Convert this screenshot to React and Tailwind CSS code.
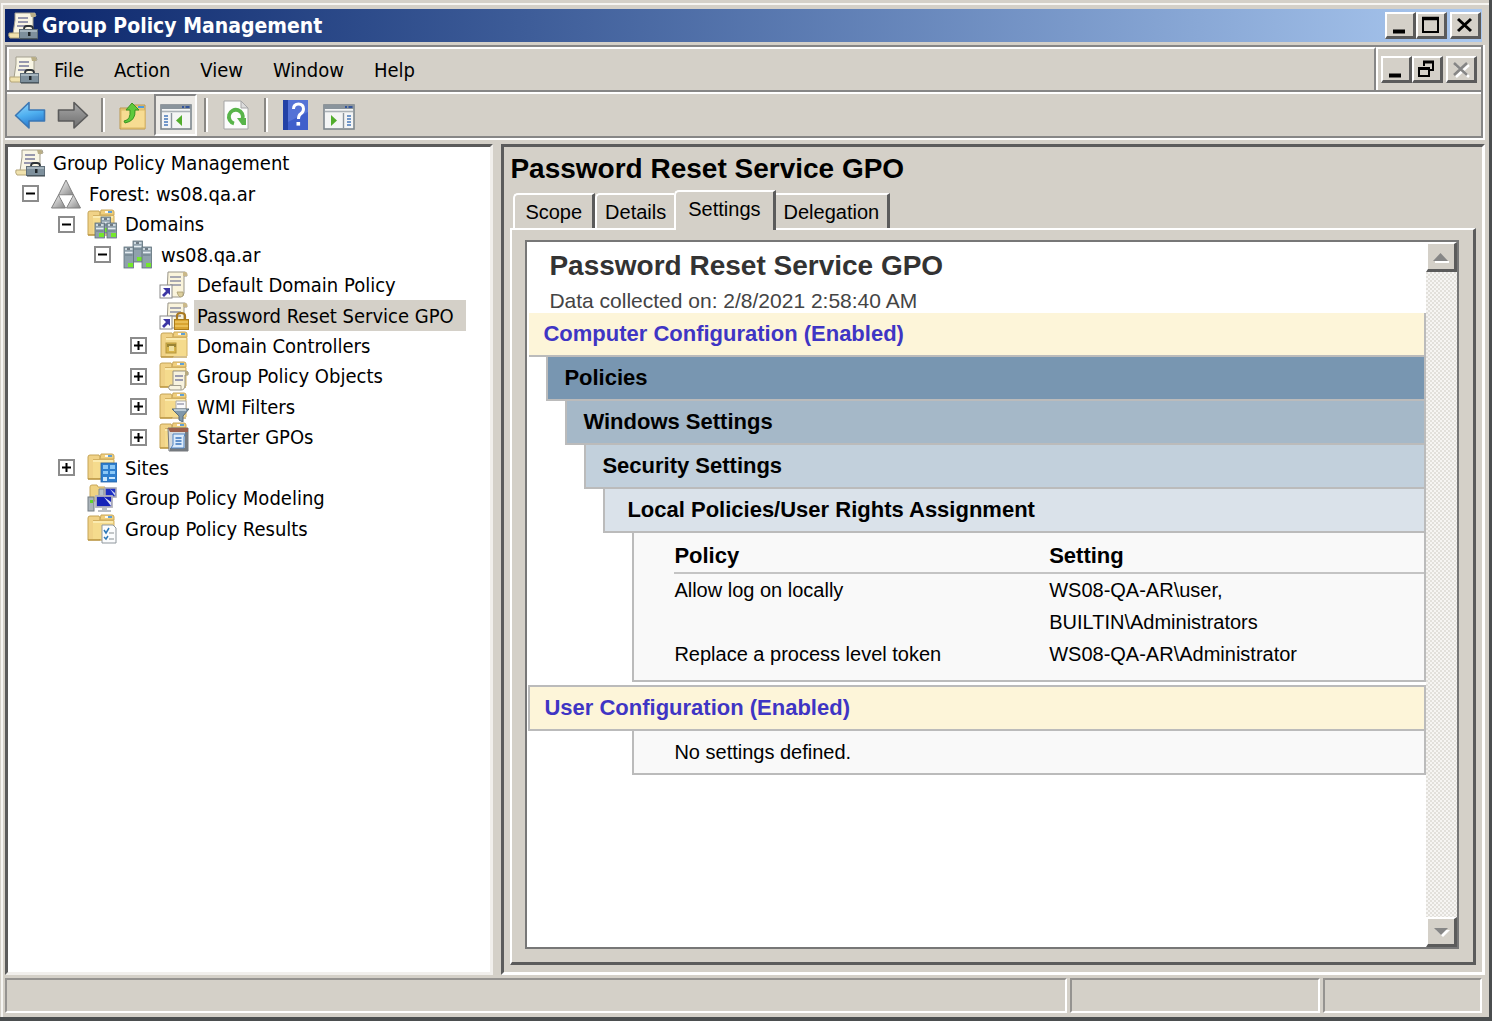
import React, { useState } from 'react';
import clsx from 'clsx';

/* ---------- Icons ---------- */

function GpmIcon() {
  return (
    <svg className="size-[30px] shrink-0" viewBox="0 0 30 30" aria-hidden="true">
      <path d="M7 2h20l1 3-3 1v17H5L7 9z" fill="#f8f5e4" stroke="#a39f8e" strokeWidth="1" />
      <path d="M22 2h4q2 1 1 4h-4z" fill="#b9ae86" />
      <path d="M10 7h10M10 11h10M9 15h10" stroke="#77799a" strokeWidth="1.6" />
      <path d="M1 22h13v5H2q-2-2-1-5z" fill="#f0e2ae" stroke="#b5a678" strokeWidth="1" />
      <path d="M16 18q0-3 3-3h3q3 0 3 3" fill="none" stroke="#2d3338" strokeWidth="1.8" />
      <rect x="11.5" y="18.5" width="18" height="9" fill="#7e909c" stroke="#5f6e79" />
      <path d="M12 20h17" stroke="#b3c0c8" strokeWidth="1.5" />
      <rect x="20" y="21" width="2.5" height="4" fill="#20262a" />
      <path d="M12 28h18" stroke="#394249" strokeWidth="1" />
    </svg>
  );
}

function ForestIcon() {
  return (
    <svg className="size-[30px] shrink-0" viewBox="0 0 30 30" aria-hidden="true">
      <defs>
        <linearGradient id="forest-fill" x1="0" y1="0" x2="1" y2="1">
          <stop offset="0.2" stopColor="#e4e4e4" />
          <stop offset="1" stopColor="#858585" />
        </linearGradient>
      </defs>
      <g fill="url(#forest-fill)" stroke="#7f7f7f" strokeWidth="1" strokeLinejoin="round">
        <path d="M15 1l7.500 15h-15z" />
        <path d="M7.500 16l7 13h-14z" />
        <path d="M22.500 16l7 13h-14z" />
      </g>
      <path d="M8.500 16.500h13L15 28z" fill="#fff" />
    </svg>
  );
}

function Folder() {
  return (
    <g>
      <path d="M1 4q0-2 2-2h9l1 2v22H1z" fill="#f0d287" stroke="#c5a457" strokeWidth="1" />
      <path d="M14 1h11q2 0 2 2v3H13z" fill="#f0cf7d" stroke="#c9a75a" strokeWidth="1" />
      <path d="M18 3h3" stroke="#fff" strokeWidth="1.8" />
      <path d="M21 3h4" stroke="#4f9be0" strokeWidth="1.8" />
      <path d="M6 6h21v19H6z" fill="#f5db8d" />
      <path d="M6 6.500h21V25" fill="none" stroke="#d3b061" strokeWidth="1" />
      <path d="M6 8h20" stroke="#fdf0bd" strokeWidth="1.5" />
      <path d="M1 26h26" stroke="#b8923d" strokeWidth="1.2" />
    </g>
  );
}

function Server({ x, y, h = 16 }) {
  return (
    <g transform={`translate(${x} ${y})`}>
      <rect width="9.5" height={h} fill="#8fa1ac" stroke="#5f707b" strokeWidth="0.8" />
      <path d="M1 2h7.500M1 5.500h7.500" stroke="#e5edf1" strokeWidth="1.6" />
      <path d="M3 2h3" stroke="#48545d" strokeWidth="1.4" />
      <path d="M1 8h7.500" stroke="#6b7c87" strokeWidth="1" />
      <rect x="4" y={h - 5} width="5" height="4" fill="#74e82c" />
    </g>
  );
}

function DomainsIcon() {
  return (
    <svg className="size-[30px] shrink-0" viewBox="0 0 30 30" aria-hidden="true">
      <Folder />
      <Server x={14} y={8} />
      <Server x={8} y={14} h={15} />
      <Server x={20} y={14} h={15} />
    </svg>
  );
}

function DomainIcon() {
  return (
    <svg className="size-[30px] shrink-0" viewBox="0 0 30 30" aria-hidden="true">
      <Server x={10} y={1} h={21} />
      <Server x={1} y={7} h={21} />
      <Server x={19} y={7} h={21} />
    </svg>
  );
}

function Scroll() {
  return (
    <g>
      <path d="M9 2h17q2 0 2 4h-3v17q0 4-4 4H8q-2-2 0-4z" fill="#faf4dc" stroke="#9a968a" strokeWidth="1" />
      <path d="M24 2h3q2 1 1 4h-4z" fill="#cbb98a" />
      <path d="M18 22h6q1 5-3 5-2-1-3-5z" fill="#dccf9f" stroke="#a79a6d" strokeWidth="0.8" />
      <path d="M11 7h11M11 11h11M11 15h11" stroke="#8d8fa3" strokeWidth="1.4" />
    </g>
  );
}

function Shortcut() {
  return (
    <g>
      <rect x="1" y="15" width="12" height="13" fill="#fff" stroke="#8a8a8a" strokeWidth="1" />
      <path d="M4 18h7v7l-2-2-4 4-2-2 4-4z" fill="#3c36a4" />
    </g>
  );
}

function PolicyLinkIcon() {
  return (
    <svg className="size-[30px] shrink-0" viewBox="0 0 30 30" aria-hidden="true">
      <Scroll />
      <Shortcut />
    </svg>
  );
}

function PolicyLockedIcon() {
  return (
    <svg className="size-[30px] shrink-0" viewBox="0 0 30 30" aria-hidden="true">
      <Scroll />
      <Shortcut />
      <path d="M18 19v-4q0-3 4-3t4 3v4" fill="none" stroke="#a9781f" strokeWidth="2.2" />
      <rect x="15.5" y="18.5" width="14" height="10" fill="#d9a431" stroke="#a87a1c" />
      <path d="M16 21h13M16 25h13" stroke="#f0c862" strokeWidth="1.3" />
    </svg>
  );
}

function ControllersIcon() {
  return (
    <svg className="size-[30px] shrink-0" viewBox="-1 0 30 30" aria-hidden="true">
      <Folder />
      <rect x="6" y="12" width="10" height="10" fill="#d8b54c" stroke="#b8973c" />
      <path d="M7 13h9v3H7z" fill="#9b8434" />
      <rect x="9" y="15" width="5" height="5" fill="#efe0a0" />
    </svg>
  );
}

function ObjectsIcon() {
  return (
    <svg className="size-[30px] shrink-0" viewBox="0 0 30 30" aria-hidden="true">
      <Folder />
      <path d="M14 10h13q3 0 2 4h-3v10q0 5-4 5H11q-3-2 0-5h3z" fill="#f8f3df" stroke="#989384" strokeWidth="1" />
      <path d="M26 10h2q2 1 1 4h-3z" fill="#b8aa7e" />
      <path d="M16 15h8M16 19h8" stroke="#7d80a0" strokeWidth="1.4" />
      <path d="M11 24.500h11v4" fill="none" stroke="#a39e8d" />
    </svg>
  );
}

function FiltersIcon() {
  return (
    <svg className="size-[30px] shrink-0" viewBox="0 0 30 30" aria-hidden="true">
      <Folder />
      <path d="M17 9h10v8H17z" fill="#fafafa" stroke="#aaa" />
      <path d="M18 12h7" stroke="#9092a8" strokeWidth="1.3" />
      <path d="M13 17h17l-6 7v6l-4-2v-4z" fill="#7f97a9" stroke="#566b7b" strokeWidth="1" />
      <path d="M15 18h12" stroke="#d5e1ea" strokeWidth="1.4" />
    </svg>
  );
}

function StarterIcon() {
  return (
    <svg className="size-[30px] shrink-0" viewBox="0 0 30 30" aria-hidden="true">
      <Folder />
      <path d="M9 6h20v23H10z" fill="#d5d9dd" stroke="#76797d" />
      <path d="M9 6h20v4H11z" fill="#9b5f4c" />
      <path d="M26 10h3v19H11v-3h15z" fill="#74797e" />
      <path d="M14 12h12l-1 3v11H12l2-3z" fill="#dcebfb" stroke="#4f83c2" />
      <path d="M16.500 16h6M16.500 19h6M16.500 22h6" stroke="#3974bd" strokeWidth="1.3" />
    </svg>
  );
}

function SitesIcon() {
  return (
    <svg className="size-[30px] shrink-0" viewBox="0 0 30 30" aria-hidden="true">
      <Folder />
      <rect x="14" y="10" width="16" height="19" fill="#2f7fce" stroke="#2461a8" strokeWidth="0.8" />
      <path d="M16 12h5v4h-5zM23 12h5v4h-5zM16 18h5v3h-5zM23 18h5v3h-5z" fill="#8cc8f6" />
      <path d="M16 24h4v4h-4zM22 24h6v2h-6z" fill="#c9e7fd" />
    </svg>
  );
}

function ModelingIcon() {
  return (
    <svg className="size-[30px] shrink-0" viewBox="0 0 30 30" aria-hidden="true">
      <path d="M3 4q0-2 2-2h5l1 2h7v14H3z" fill="#efd283" stroke="#c9a75a" />
      <path d="M12 6h5v10h-5z" fill="#b7c2ca" stroke="#7f8b94" />
      <rect x="18" y="5" width="11" height="9" fill="#1d2fc4" stroke="#a8a8b4" strokeWidth="1.6" />
      <path d="M23 6l5 4v3z" fill="#c7d0f5" />
      <rect x="1" y="14" width="6" height="14" fill="#aab4ba" stroke="#737d84" />
      <rect x="3" y="17" width="3" height="3" fill="#5ed32b" />
      <rect x="9" y="13" width="16" height="11" fill="#1623b8" stroke="#b3b3bd" strokeWidth="1.8" />
      <path d="M17 14l7 5v4z" fill="#dfe4fa" />
      <path d="M15 25h5v2h4v2H11v-2h4z" fill="#b9bdc3" />
    </svg>
  );
}

function ResultsIcon() {
  return (
    <svg className="size-[30px] shrink-0" viewBox="0 0 30 30" aria-hidden="true">
      <Folder />
      <path d="M15 11h11l3 3v15H15z" fill="#fbfcfd" stroke="#8f979d" />
      <path d="M17 16l2 3 3-5M17 23l2 2 2-3" fill="none" stroke="#2e79b8" strokeWidth="1.5" />
      <path d="M22 19h5M22 25h5" stroke="#8a8f94" strokeWidth="1.2" />
    </svg>
  );
}

function ArrowIcon({ back }) {
  return (
    <svg className="h-[28px] w-[32px]" viewBox="0 0 32 28" aria-hidden="true">
      <defs>
        <linearGradient id="arrow-blue" x1="0" y1="0" x2="0.3" y2="1">
          <stop offset="0" stopColor="#9bd8fb" />
          <stop offset="0.55" stopColor="#4fb0f0" />
          <stop offset="1" stopColor="#2a7ad0" />
        </linearGradient>
        <linearGradient id="arrow-gray" x1="0" y1="0" x2="0" y2="1">
          <stop offset="0" stopColor="#a9a9a9" />
          <stop offset="1" stopColor="#6e6e6e" />
        </linearGradient>
      </defs>
      {back ? (
        <path d="M1.500 14.500L15 1.500V9h15.500v11H15v7z" fill="url(#arrow-blue)" stroke="#3b77b4" strokeWidth="1.6" strokeLinejoin="round" />
      ) : (
        <path d="M30.500 14.500L17 1.500V9H1.500v11H17v7z" fill="url(#arrow-gray)" stroke="#5b5b5b" strokeWidth="1.6" strokeLinejoin="round" />
      )}
    </svg>
  );
}

function UpFolderIcon() {
  return (
    <svg className="size-[30px]" viewBox="0 -1 30 30" aria-hidden="true">
      <path d="M2 7h12l2-3h11v24H2z" fill="#e9c878" stroke="#bb9850" />
      <path d="M20 6h6" stroke="#4f9be0" strokeWidth="2" />
      <path d="M3 9h24v18H3z" fill="#f7dc92" stroke="#dcb967" />
      <path d="M6 20q7-1 6-11H8l6-7 7 7h-4q1 11-10 13z" fill="#5fc93c" stroke="#3c9523" strokeWidth="1" />
    </svg>
  );
}

function PaneIcon({ right }) {
  return (
    <svg className="h-[30px] w-[32px]" viewBox="0 -4 32 30" aria-hidden="true">
      <rect x="1" y="1" width="30" height="24" fill="#f4f5f5" stroke="#7e878e" strokeWidth="1.6" />
      <rect x="1" y="1" width="30" height="4" fill="#8a949c" />
      <path d="M22 3h2M25.500 3h4" stroke="#33549a" strokeWidth="2" />
      <path d="M2 7.500h28" stroke="#aab1b6" strokeWidth="1.6" />
      {right ? (
        <g>
          <path d="M20.500 9v15" stroke="#8a949c" strokeWidth="1.4" />
          <path d="M24 12h4M24 15h4M24 18h4M24 21h4" stroke="#4678bb" strokeWidth="1.5" />
          <path d="M8 11v11l6-5.500z" fill="#52ad2d" />
        </g>
      ) : (
        <g>
          <path d="M11.500 9v15" stroke="#8a949c" strokeWidth="1.4" />
          <path d="M4 12h4M4 15h4M4 18h4M4 21h4" stroke="#4678bb" strokeWidth="1.5" />
          <path d="M22 11v11l-6-5.500z" fill="#52ad2d" />
        </g>
      )}
    </svg>
  );
}

function RefreshIcon() {
  return (
    <svg className="size-[30px]" viewBox="0 0 30 30" aria-hidden="true">
      <path d="M3 1h17l7 7v21H3z" fill="#fcfcfc" stroke="#a5a5a5" />
      <path d="M20 1v7h7z" fill="#dcdcdc" stroke="#a5a5a5" />
      <path d="M13 23.500A7 7 0 1 1 21.500 19" fill="none" stroke="#58b44a" strokeWidth="3.8" />
      <path d="M16 18h9v7h-4z" fill="#58b44a" />
    </svg>
  );
}

function HelpIcon() {
  return (
    <svg className="size-[30px]" viewBox="0 0 30 30" aria-hidden="true">
      <rect x="2" y="0" width="25" height="30" fill="#3f5fcb" />
      <rect x="2" y="0" width="5" height="30" fill="#2341a6" />
      <path d="M7 0h20v12L7 22z" fill="#6480dd" opacity="0.6" />
      <path d="M12.500 9q0-5 5-5t5 5q0 3-3 5-2 1.500-2 5" fill="none" stroke="#fff" strokeWidth="3" />
      <rect x="15.500" y="22" width="3.600" height="3.600" fill="#fff" />
    </svg>
  );
}

/* ---------- Small controls ---------- */

function CaptionButton({ label, kind }) {
  return (
    <button
      type="button"
      aria-label={label}
      className="flex h-[27px] w-[31px] items-center justify-center border-t-2 border-r-3 border-b-3 border-l-2 border-t-white border-r-[#5b5b5b] border-b-[#5b5b5b] border-l-white bg-[#d4d0c8]"
    >
      <svg className="h-[20px] w-[24px]" viewBox="0 0 24 20" aria-hidden="true">
        {kind === 'min' && <path d="M5 16.500h12" stroke="#000" strokeWidth="4" />}
        {kind === 'max' && (
          <g>
            <rect x="4" y="3" width="15" height="14" fill="none" stroke="#000" strokeWidth="2" />
            <path d="M3 3.500h17" stroke="#000" strokeWidth="3.5" />
          </g>
        )}
        {kind === 'restore' && (
          <g>
            <path d="M9 7V3h9v8h-4" fill="none" stroke="#000" strokeWidth="2" />
            <path d="M8 3h11" stroke="#000" strokeWidth="3" />
            <rect x="4" y="10" width="10" height="7" fill="none" stroke="#000" strokeWidth="2" />
            <path d="M3 9.500h12" stroke="#000" strokeWidth="3" />
          </g>
        )}
        {kind === 'close' && <path d="M5 4l13 12M18 4L5 16" stroke="#000" strokeWidth="3" />}
        {kind === 'close-off' && (
          <g>
            <path d="M7 6l13 12M20 6L7 18" stroke="#fff" strokeWidth="2.5" />
            <path d="M5 4l13 12M18 4L5 16" stroke="#868686" strokeWidth="2.5" />
          </g>
        )}
      </svg>
    </button>
  );
}

function ToolButton({ label, pressed, children }) {
  return (
    <button
      type="button"
      aria-label={label}
      aria-pressed={pressed}
      className={clsx(
        'flex h-[42px] w-[43px] items-center justify-center',
        pressed && 'border-2 border-t-[#868686] border-r-white border-b-white border-l-[#868686] bg-[#eceae6]'
      )}
    >
      {children}
    </button>
  );
}

function Separator() {
  return (
    <div className="flex w-[17px] justify-center">
      <div className="h-[34px] border-r-2 border-l-2 border-l-[#8a8884] border-r-white" />
    </div>
  );
}

function ScrollButton({ label, down }) {
  return (
    <button
      type="button"
      aria-label={label}
      className="flex h-[30px] w-full items-center justify-center border-t-2 border-r-3 border-b-3 border-l-2 border-t-white border-r-[#5b5b5b] border-b-[#5b5b5b] border-l-white bg-[#d4d0c8]"
    >
      <svg className="h-[12px] w-[18px]" viewBox="0 0 18 12" aria-hidden="true">
        {down ? (
          <g>
            <path d="M4 4h14l-7 7z" fill="#fff" />
            <path d="M2 2h14L9 9z" fill="#868686" />
          </g>
        ) : (
          <g>
            <path d="M3 11h14" stroke="#fff" strokeWidth="2" />
            <path d="M1 10h15L8.500 2z" fill="#868686" />
          </g>
        )}
      </svg>
    </button>
  );
}

/* ---------- Tree ---------- */

const TREE = [
  { label: 'Group Policy Management', level: 0, icon: GpmIcon },
  { label: 'Forest: ws08.qa.ar', level: 1, icon: ForestIcon, state: 'open' },
  { label: 'Domains', level: 2, icon: DomainsIcon, state: 'open' },
  { label: 'ws08.qa.ar', level: 3, icon: DomainIcon, state: 'open' },
  { label: 'Default Domain Policy', level: 4, icon: PolicyLinkIcon },
  { label: 'Password Reset Service GPO', level: 4, icon: PolicyLockedIcon },
  { label: 'Domain Controllers', level: 4, icon: ControllersIcon, state: 'closed' },
  { label: 'Group Policy Objects', level: 4, icon: ObjectsIcon, state: 'closed' },
  { label: 'WMI Filters', level: 4, icon: FiltersIcon, state: 'closed' },
  { label: 'Starter GPOs', level: 4, icon: StarterIcon, state: 'closed' },
  { label: 'Sites', level: 2, icon: SitesIcon, state: 'closed' },
  { label: 'Group Policy Modeling', level: 2, icon: ModelingIcon },
  { label: 'Group Policy Results', level: 2, icon: ResultsIcon },
];

const INDENT = ['pl-[7px]', 'pl-[14px]', 'pl-[50px]', 'pl-[86px]', 'pl-[122px]'];

function TreeRow({ node, selected, onSelect }) {
  const Icon = node.icon;
  return (
    <li
      role="treeitem"
      aria-level={node.level + 1}
      aria-selected={selected}
      className={clsx('flex items-center', INDENT[node.level])}
    >
      {node.level > 0 && (
        <span className="w-[29px] shrink-0">
          {node.state && (
            <button
              type="button"
              aria-label={node.state === 'open' ? 'Collapse' : 'Expand'}
              className="flex size-[17px] items-center justify-center border-2 border-[#8c8c8c] bg-white"
            >
              <svg className="size-[13px]" viewBox="0 0 13 13" aria-hidden="true">
                <path d="M2 6.500h9" stroke="#000" strokeWidth="2" />
                {node.state === 'closed' && <path d="M6.500 2v9" stroke="#000" strokeWidth="2" />}
              </svg>
            </button>
          )}
        </span>
      )}
      <Icon />
      <button
        type="button"
        onClick={onSelect}
        className={clsx('ml-[5px] h-full pr-[12px] pl-[3px] whitespace-nowrap', selected && 'bg-[#d4d0c8]')}
      >
        {node.label}
      </button>
    </li>
  );
}

/* ---------- Report ---------- */

const SECTIONS = [
  { title: 'Policies', className: 'ml-[19px] bg-[#7896b1] pl-[16px]' },
  { title: 'Windows Settings', className: 'ml-[38px] bg-[#a5b8c8] pl-[16px]' },
  { title: 'Security Settings', className: 'ml-[57px] bg-[#c2d0dc] pl-[16px]' },
  { title: 'Local Policies/User Rights Assignment', className: 'ml-[76px] bg-[#dae2ea] pl-[22px]' },
];

function Report() {
  return (
    <article className="min-w-0 flex-1 overflow-hidden">
      <h2 className="pt-[8px] pl-[22px] text-[28px] leading-[32px] font-bold text-[#333]">Password Reset Service GPO</h2>
      <p className="pt-[7px] pl-[22px] text-[21px] leading-[24px] text-[#444]">Data collected on: 2/8/2021 2:58:40 AM</p>

      <h3 className="ml-[2px] h-[44px] border-r-2 border-b-2 border-[#bbb] bg-[#fdf5d9] pl-[14px] text-[22px] leading-[42px] font-bold text-[#3f35c4]">
        Computer Configuration (Enabled)
      </h3>
      {SECTIONS.map((s) => (
        <h4
          key={s.title}
          className={clsx('h-[44px] border-r-2 border-b-2 border-l-2 border-[#bbb] text-[22px] leading-[42px] font-bold', s.className)}
        >
          {s.title}
        </h4>
      ))}

      <div className="ml-[105px] border-r-2 border-b-2 border-l-2 border-[#bbb] bg-[#f9f9f9] pt-[7px] pb-[10px] pl-[40px]">
        <table className="w-full table-fixed text-left text-[20px] leading-[32px]">
          <thead>
            <tr className="border-b-2 border-[#c4c4c4] text-[22px]">
              <th className="w-1/2 p-0 font-bold">Policy</th>
              <th className="w-1/2 p-0 font-bold">Setting</th>
            </tr>
          </thead>
          <tbody className="align-top">
            <tr>
              <td className="p-0">Allow log on locally</td>
              <td className="p-0">
                WS08-QA-AR\user,
                <br />
                BUILTIN\Administrators
              </td>
            </tr>
            <tr>
              <td className="p-0">Replace a process level token</td>
              <td className="p-0">WS08-QA-AR\Administrator</td>
            </tr>
          </tbody>
        </table>
      </div>

      <h3 className="mt-[3px] ml-[1px] h-[46px] border-2 border-[#bbb] bg-[#fdf5d9] pl-[14px] text-[22px] leading-[42px] font-bold text-[#3f35c4]">
        User Configuration (Enabled)
      </h3>
      <p className="ml-[105px] h-[44px] border-r-2 border-b-2 border-l-2 border-[#bbb] bg-[#f9f9f9] pl-[40px] text-[20px] leading-[42px]">
        No settings defined.
      </p>
    </article>
  );
}

const TABS = ['Scope', 'Details', 'Settings', 'Delegation'];

const TAB_STYLE = {
  Scope: 'h-[35px] rounded-tl-[5px] border-l-2 border-r-3 px-[10px]',
  Details: 'h-[35px] rounded-tl-[5px] border-l-2 px-[8px]',
  Settings: 'z-10 -mb-[2px] h-[40px] rounded-tl-[5px] border-l-2 border-r-3 px-[12px] pb-[4px]',
  Delegation: 'h-[35px] border-r-3 px-[8px]',
};

export default function App() {
  const [selected, setSelected] = useState('Password Reset Service GPO');
  const [tab, setTab] = useState('Settings');

  return (
    <div className="h-screen bg-white pb-[3px] font-['DejaVu_Sans_Condensed','DejaVu_Sans',sans-serif] text-[20px] leading-[24px] text-black">
      <div className="flex h-full flex-col border-r-3 border-b-4 border-[#4b4e4f] bg-[#d4d0c8] pt-[3px] pl-px">
        <div className="flex min-h-0 flex-1 flex-col border-t-2 border-l-2 border-[#f6f5f2] pt-[4px] pr-[4px] pb-[4px] pl-[2px]">
          {/* Title bar */}
          <header className="mr-[3px] flex h-[33px] items-center bg-linear-to-r from-[#0b246a] to-[#abc9f0] pr-px pl-[3px]">
            <GpmIcon />
            <h1 className="flex-1 pl-[4px] text-[21px] font-bold text-white">Group Policy Management</h1>
            <div className="flex">
              <CaptionButton label="Minimize" kind="min" />
              <CaptionButton label="Maximize" kind="max" />
              <div className="w-[3px]" />
              <CaptionButton label="Close" kind="close" />
            </div>
          </header>

          {/* Menu bar and toolbar */}
          <div className="mt-[3px] border-r-2 border-b-2 border-white">
            <div className="border-2 border-[#868686]">
              <div className="flex h-[45px] border-b-2 border-[#868686]">
                <nav className="flex flex-1 items-center border-t-2 border-l-2 border-r-2 border-t-white border-l-white border-r-[#868686]">
                  <GpmIcon />
                  <div className="flex">
                    {['File', 'Action', 'View', 'Window', 'Help'].map((m) => (
                      <button key={m} type="button" className="px-[15px]">
                        {m}
                      </button>
                    ))}
                  </div>
                </nav>
                <div className="flex items-center border-t-2 border-l-2 border-white pr-[4px] pl-[3px]">
                  <CaptionButton label="Minimize child window" kind="min" />
                  <CaptionButton label="Restore child window" kind="restore" />
                  <div className="w-[3px]" />
                  <CaptionButton label="Close child window" kind="close-off" />
                </div>
              </div>
              <div className="flex h-[44px] items-center border-t-2 border-white pl-px">
                <ToolButton label="Back">
                  <ArrowIcon back />
                </ToolButton>
                <ToolButton label="Forward">
                  <ArrowIcon />
                </ToolButton>
                <Separator />
                <ToolButton label="Up one level">
                  <UpFolderIcon />
                </ToolButton>
                <ToolButton label="Show or hide console tree" pressed>
                  <PaneIcon />
                </ToolButton>
                <Separator />
                <ToolButton label="Refresh">
                  <RefreshIcon />
                </ToolButton>
                <Separator />
                <ToolButton label="Help">
                  <HelpIcon />
                </ToolButton>
                <ToolButton label="Show or hide action pane">
                  <PaneIcon right />
                </ToolButton>
              </div>
            </div>
          </div>

          {/* Panes */}
          <main className="mt-[4px] flex min-h-0 flex-1 gap-[8px]">
            <aside className="w-[33%] border-t-3 border-r-3 border-b-3 border-l-3 border-t-[#5b5b5b] border-r-[#f1efec] border-b-[#f1efec] border-l-[#5b5b5b] bg-white pt-px">
              <ul role="tree" aria-label="Console tree" className="grid h-[396px] auto-rows-fr">
                {TREE.map((n) => (
                  <TreeRow key={n.label} node={n} selected={selected === n.label} onSelect={() => setSelected(n.label)} />
                ))}
              </ul>
            </aside>

            <section className="flex min-w-0 flex-1 flex-col border-3 border-t-[#5b5b5b] border-r-white border-b-white border-l-[#5b5b5b] pr-[6px] pb-[7px] pl-[6px] font-['Liberation_Sans',Arial,sans-serif]">
              <h2 className="pt-[6px] text-[28px] leading-[32px] font-bold">Password Reset Service GPO</h2>
              <div role="tablist" className="flex h-[43px] items-end pl-[3px]">
                {TABS.map((t) => (
                  <button
                    key={t}
                    type="button"
                    role="tab"
                    aria-selected={tab === t}
                    onClick={() => setTab(t)}
                    className={clsx(
                      'relative border-t-2 border-t-white border-r-[#5b5b5b] border-l-white bg-[#d4d0c8] whitespace-nowrap',
                      TAB_STYLE[t]
                    )}
                  >
                    {t}
                  </button>
                ))}
              </div>
              <div role="tabpanel" className="flex min-h-0 flex-1 border-t-2 border-r-3 border-b-3 border-l-2 border-t-white border-r-[#5b5b5b] border-b-[#5b5b5b] border-l-white pt-[10px] pr-[14px] pb-[13px] pl-[13px]">
                <div className="flex min-w-0 flex-1 border-2 border-[#777] bg-white">
                  <Report />
                  <div className="flex w-[31px] flex-col justify-between bg-[#eceae6] bg-[repeating-conic-gradient(#e2e0db_0_25%,#f6f5f3_0_50%)] bg-[length:4px_4px]">
                    <ScrollButton label="Scroll up" />
                    <ScrollButton label="Scroll down" down />
                  </div>
                </div>
              </div>
            </section>
          </main>

          {/* Status bar */}
          <footer className="mt-[3px] mr-[3px] flex h-[35px] gap-[3px]">
            <div className="flex-1 border-2 border-t-[#959390] border-r-white border-b-white border-l-[#959390]" />
            <div className="w-[250px] border-2 border-t-[#959390] border-r-white border-b-white border-l-[#959390]" />
            <div className="w-[159px] border-2 border-t-[#959390] border-r-white border-b-white border-l-[#959390]" />
          </footer>
        </div>
      </div>
    </div>
  );
}
